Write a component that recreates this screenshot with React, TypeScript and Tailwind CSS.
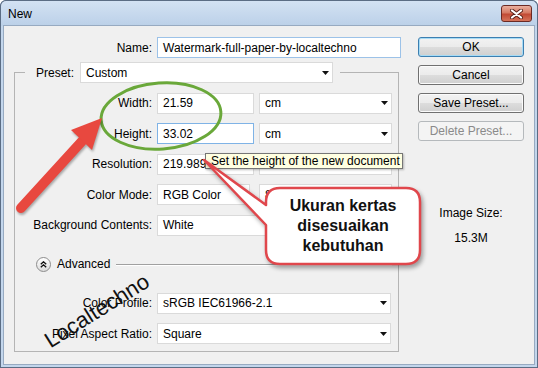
import React from 'react';

const Caret = () => (
  <svg width="7" height="4" viewBox="0 0 7 4">
    <path d="M0 0h7L3.5 4z" fill="#111" />
  </svg>
);

const TextBox = ({ value, className }: { value: string; className: string }) => (
  <div className={`h-[21px] bg-white border flex items-center pl-[5px] ${className}`}>{value}</div>
);

const Select = ({ value, className }: { value: string; className: string }) => (
  <div className={`h-[21px] bg-white border border-[#dadada] flex items-center justify-between pl-[5px] pr-[3px] ${className}`}>
    <span>{value}</span>
    <Caret />
  </div>
);

const Button = ({ label, kind }: { label: string; kind?: 'default' | 'disabled' }) => {
  if (kind === 'disabled') {
    return (
      <div className="h-[20px] w-[106px] rounded-[3px] border border-[#b5b9bc] bg-[#f4f4f4] text-[#8a8a8a] flex items-center justify-center">
        {label}
      </div>
    );
  }
  return (
    <div
      className={`h-[20px] w-[106px] rounded-[3px] border flex items-center justify-center bg-[linear-gradient(#f2f2f2,#ebebeb_50%,#dddddd_50%,#cfcfcf)] ${
        kind === 'default'
          ? 'border-[#3c7fb1] shadow-[inset_0_0_0_1px_#a6dbf5]'
          : 'border-[#707070] shadow-[inset_0_0_0_1px_#fbfbfb]'
      }`}
    >
      {label}
    </div>
  );
};

const Row = ({ label, children }: { label: string; children: React.ReactNode }) => (
  <div className="flex items-center h-[21px]">
    <span className="w-[137px] text-right">{label}</span>
    <div className="ml-[5px] flex items-center">{children}</div>
  </div>
);

export default function App() {
  return (
    <div className="relative w-[538px] h-[368px] overflow-hidden bg-[#c3d6ec] rounded-t-[6px] shadow-[inset_0_0_0_1px_#5b6d84] font-['Liberation_Sans',Arial,sans-serif] text-[12px] leading-[14px] text-black">
      {/* title bar */}
      <div className="h-[26px] flex items-center justify-between pl-[7px] pr-[5px] rounded-t-[6px] border-t border-x border-[#5b6d84] bg-[linear-gradient(#d3e2f3,#bbd0e8)]">
        <span className="text-[12px]">New</span>
        <div className="w-[31px] h-[17px] rounded-[3px] border border-[#6b2a24] bg-[linear-gradient(#eab0a0,#d67a63_45%,#c24a34_55%,#d5735a)] flex items-center justify-center">
          <svg width="13" height="10" viewBox="0 0 13 10">
            <path d="M2 1.5l9 7M11 1.5l-9 7" stroke="#5a241c" strokeWidth="4" strokeLinecap="round" />
            <path d="M2 1.5l9 7M11 1.5l-9 7" stroke="#fff" strokeWidth="2.2" strokeLinecap="round" />
          </svg>
        </div>
      </div>

      {/* dialog body */}
      <div className="mx-[4px] h-[338px] bg-[#f0f0f0] shadow-[0_0_0_1px_#97aac1] flex pt-[11px]">
        <div className="w-[397px] flex flex-col">
          <div className="flex items-center h-[21px]">
            <span className="w-[148px] text-right">Name:</span>
            <TextBox className="ml-[5px] w-[244px] border-[#9cc2e8]" value="Watermark-full-paper-by-localtechno" />
          </div>

          <fieldset className="mt-[4px] ml-[10px] w-[385px] border border-[#b4b4b4] pb-[7px]">
            <legend className="ml-[10px] pl-[11px] pr-[7px]">
              <div className="flex items-center h-[21px]">
                <span>Preset:</span>
                <Select className="ml-[6px] w-[253px]" value="Custom" />
              </div>
            </legend>

            <div className="flex flex-col gap-[9.5px] pt-[9.5px]">
              <Row label="Width:">
                <TextBox className="w-[97px] border-[#dadada]" value="21.59" />
                <Select className="ml-[5px] w-[133px]" value="cm" />
              </Row>
              <Row label="Height:">
                <TextBox className="w-[97px] border-[#7fb3e6]" value="33.02" />
                <Select className="ml-[5px] w-[133px]" value="cm" />
              </Row>
              <Row label="Resolution:">
                <TextBox className="w-[97px] border-[#dadada]" value="219.989" />
                <Select className="ml-[5px] w-[133px]" value="Pixels/Inch" />
              </Row>
              <Row label="Color Mode:">
                <Select className="w-[93px]" value="RGB Color" />
                <Select className="ml-[9px] w-[133px]" value="8 bit" />
              </Row>
              <Row label="Background Contents:">
                <Select className="w-[235px]" value="White" />
              </Row>
            </div>

            <div className="mt-[20.5px] h-[16px] flex items-center">
              <div className="ml-[21px] w-[15px] h-[15px] rounded-full border border-[#8d8d8d] bg-[linear-gradient(#ffffff,#dcdcdc)] flex items-center justify-center">
                <svg width="7" height="7" viewBox="0 0 7 7">
                  <path d="M0.8 3.3L3.5 0.8L6.2 3.3M0.8 6.3L3.5 3.8L6.2 6.3" stroke="#111" strokeWidth="1.3" fill="none" />
                </svg>
              </div>
              <span className="ml-[6px]">Advanced</span>
              <div className="flex-1 ml-[6px] mr-[6px] border-t border-[#a0a0a0] shadow-[0_1px_0_#ffffff]" />
            </div>

            <div className="flex flex-col gap-[9.5px] mt-[20.5px]">
              <Row label="Color Profile:">
                <Select className="w-[234px]" value="sRGB IEC61966-2.1" />
              </Row>
              <Row label="Pixel Aspect Ratio:">
                <Select className="w-[234px]" value="Square" />
              </Row>
            </div>
          </fieldset>
        </div>

        <div className="ml-[17px] w-[106px] flex flex-col">
          <div className="flex flex-col gap-[8px]">
            <Button label="OK" kind="default" />
            <Button label="Cancel" />
            <Button label="Save Preset..." />
            <Button label="Delete Preset..." kind="disabled" />
          </div>
          <div className="mt-[65px] text-center">Image Size:</div>
          <div className="mt-[11px] text-center">15.3M</div>
        </div>
      </div>

      {/* tooltip */}
      <div className="absolute left-[205px] top-[153px] w-[198px] h-[16px] bg-[#ffffe1] border border-[#767676] pl-[5px] flex items-center shadow-[1px_1px_2px_rgba(0,0,0,0.25)]">
        Set the height of the new document
      </div>

      {/* annotations */}
      <svg className="absolute inset-0 pointer-events-none" width="538" height="368" viewBox="0 0 538 368">
        <ellipse cx="161" cy="116" rx="60" ry="33" transform="rotate(-4 161 116)" fill="none" stroke="#6aa83a" strokeWidth="3" />
        <g style={{ filter: 'drop-shadow(1px 2px 1px rgba(0,0,0,0.3))' }}>
          <line x1="21" y1="208" x2="84" y2="139" stroke="#e8483f" strokeWidth="10" strokeLinecap="round" />
          <polygon points="102,118 71,130 92,150" fill="#e8483f" />
        </g>
        <path
          d="M266 205 L266 202 Q266 188 280 188 L406 188 Q420 188 420 202 L420 250 Q420 264 406 264 L280 264 Q266 264 266 250 L266 225 L204 160 Z"
          fill="#ffffff"
          stroke="#e0474c"
          strokeWidth="2.5"
          strokeLinejoin="round"
          style={{ filter: 'drop-shadow(2px 3px 2px rgba(0,0,0,0.35))' }}
        />
      </svg>

      <div className="absolute left-[266px] top-[196px] w-[154px] text-center text-[16px] leading-[20px] font-bold text-[#111]">
        Ukuran kertas
        <br />
        disesuaikan
        <br />
        kebutuhan
      </div>

      <div className="absolute left-[37px] top-[301px] w-[120px] text-center text-[22px] leading-[20px] text-[#111] -rotate-[32deg]">
        Localtechno
      </div>
    </div>
  );
}
